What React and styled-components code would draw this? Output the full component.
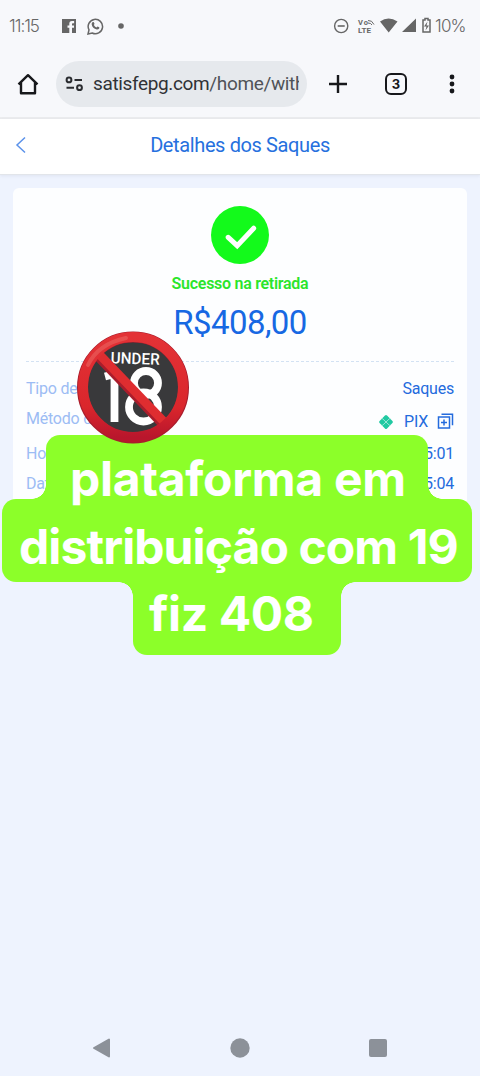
import styled, { createGlobalStyle } from 'styled-components';

const GlobalStyle = createGlobalStyle`
  * {
    box-sizing: border-box;
  }
  body {
    margin: 0;
    background: #eef3fe;
    font-family: Roboto, sans-serif;
  }
  svg {
    display: block;
    flex: none;
  }
`;
const Screen = styled.div`
  position: relative;
  display: flex;
  flex-direction: column;
  width: 480px;
  height: 1076px;
  overflow: hidden;
  background: #eef3fe;
`;
const Chrome = styled.div`
  height: 119px;
  background: #f7f8fb;
  border-bottom: 2px solid #ebecee;
`;
const StatusBar = styled.div`
  display: flex;
  align-items: center;
  height: 52px;
  padding: 0 12px 0 9px;
  color: #666;
`;
const StatusText = styled.span`
  width: ${(p) => p.$width}px;
  font: 300 17px/20px Inter, sans-serif;
  letter-spacing: ${(p) => p.$spacing}px;
  white-space: nowrap;
`;
const StatusIcons = styled.div`
  display: flex;
  align-items: center;
  margin-left: ${(p) => p.$left};
`;
const Toolbar = styled.div`
  display: flex;
  align-items: center;
  height: 64px;
  padding: 0 16px;
`;
const AddressBar = styled.div`
  display: flex;
  align-items: center;
  width: 251px;
  height: 46px;
  margin: 0 20px 0 16px;
  padding: 0 8px 0 9px;
  border-radius: 23px;
  background: #e6e9ed;
`;
const Url = styled.div`
  width: 206px;
  margin-left: 9px;
  overflow: hidden;
  color: #303236;
  font-size: 19px;
  line-height: 26px;
  letter-spacing: -0.36px;
  white-space: nowrap;
`;
const UrlPath = styled.span`
  color: #505358;
`;
const Tabs = styled.div`
  display: flex;
  align-items: center;
  justify-content: center;
  width: 22px;
  height: 22px;
  margin: 0 41px 0 36px;
  border: 2.4px solid #17181b;
  border-radius: 6px;
  color: #17181b;
  font: 700 13px/14px Inter, sans-serif;
`;
const Header = styled.header`
  display: flex;
  align-items: center;
  height: 56px;
  padding: 0 15px;
  background: #fff;
  border-bottom: 1px solid #e2e5ea;
  box-shadow: 0 1px 3px rgba(60, 70, 90, 0.08);
`;
const Title = styled.h1`
  flex: 1;
  margin: 0 11px 3px 0;
  color: #2670de;
  font-size: 20px;
  font-weight: 400;
  line-height: 24px;
  letter-spacing: -0.38px;
  text-align: center;
`;
const Card = styled.main`
  display: flex;
  flex-direction: column;
  align-items: center;
  height: 320px;
  margin: 13px 13px 0;
  padding: 18px 13px 0;
  border-radius: 6px;
  background: #fdfeff;
`;
const Status = styled.div`
  margin-top: 10px;
  color: #2be52b;
  font-size: 16px;
  font-weight: 600;
  line-height: 20px;
  letter-spacing: -0.28px;
`;
const Amount = styled.div`
  margin-top: 8px;
  color: #1768e3;
  font-size: 33px;
  line-height: 42px;
  letter-spacing: -0.55px;
`;
const Details = styled.div`
  width: 100%;
  margin-top: 17px;
  padding-top: 12px;
  border-top: 1px dashed #d3e2f3;
`;
const Row = styled.div`
  display: flex;
  align-items: center;
  justify-content: space-between;
  height: ${(p) => p.$height || 30}px;
  font-size: 16px;
  line-height: 20px;
  letter-spacing: -0.22px;
`;
const Label = styled.span`
  align-self: flex-start;
  margin-top: 5px;
  color: #9cbcf4;
`;
const Value = styled.span`
  display: flex;
  align-items: center;
  color: #246bdd;
`;
const Method = styled.span`
  margin: 0 9px 0 10px;
`;
const Emoji = styled.div`
  position: absolute;
  z-index: 2;
  top: 330px;
  left: 76px;
`;
const Caption = styled.div`
  position: absolute;
  top: 435px;
  left: 2px;
  display: flex;
  flex-direction: column;
  width: 470px;
`;
const CaptionLine = styled.div`
  position: relative;
  width: ${(p) => p.$width}px;
  height: ${(p) => p.$height}px;
  margin-left: ${(p) => p.$left}px;
  padding: ${(p) => p.$pad};
  border-radius: ${(p) => p.$radius};
  background: #8cff29;
  color: #fff;
  font: 700 48px/58px Inter, sans-serif;
  letter-spacing: ${(p) => p.$spacing}px;
  white-space: nowrap;
  &::before,
  &::after {
    content: '';
    position: absolute;
    display: ${(p) => (p.$notch ? 'block' : 'none')};
    ${(p) => p.$notch || 'top'}: 0;
    width: 14px;
    height: 14px;
  }
  &::before {
    right: 100%;
    background: radial-gradient(circle at left ${(p) => (p.$notch === 'top' ? 'bottom' : 'top')}, transparent 13.5px, #8cff29 14px);
  }
  &::after {
    left: 100%;
    background: radial-gradient(circle at right ${(p) => (p.$notch === 'top' ? 'bottom' : 'top')}, transparent 13.5px, #8cff29 14px);
  }
`;
const CaptionText = styled.span`
  position: relative;
  z-index: 1;
`;
const NavBar = styled.nav`
  display: flex;
  align-items: center;
  justify-content: space-between;
  height: 56px;
  margin-top: auto;
  padding: 0 92px;
`;

const FacebookIcon = () => (
  <svg width="14" height="14" viewBox="0 0 14 14">
    <path fill="#666" d="M0 0h14v14h-4V8.8h2V6.5h-2V5.2c0-.8.3-1 1-1h1.1V2H10C8 2 7.3 3.3 7.3 4.8v1.7H5.5v2.3h1.8V14H0Z" />
  </svg>
);
const WhatsappIcon = () => (
  <svg width="17" height="17" viewBox="0 0 17 17" style={{ marginLeft: 11 }}>
    <path fill="none" stroke="#666" strokeWidth="1.5" d="m1 16 1-4.1A7.2 7.2 0 1 1 5.2 15Z" />
    <path fill="#666" d="M5.8 4.1c.5-.3.9-.2 1.1.3l.6 1.4c.1.4-.5.8-.6 1.2.5 1.1 1.4 1.9 2.5 2.4.5-.1.8-1 1.2-.9l1.5.8c.4.2.3.7.1 1.1-.5.9-1.5 1.3-2.5 1.1C7.1 11 5 9 4.7 6.5c-.1-.9.3-1.9 1.1-2.4Z" />
  </svg>
);
const SystemIcons = () => (
  <svg width="102" height="20" viewBox="0 0 102 20" fill="#666">
    <circle cx="8.2" cy="10" r="6.6" fill="none" stroke="#666" strokeWidth="1.4" />
    <path d="M4.7 9.2h7v1.6h-7Z" />
    <text x="25" y="8.6" fontFamily="Roboto" fontSize="7.5" fontWeight="700" textLength="10">Vo</text>
    <text x="25" y="16.5" fontFamily="Roboto" fontSize="8" fontWeight="700" textLength="13">LTE</text>
    <path d="M35 4.500q4-.5 6 4M35 7q3 0 4 2" fill="none" stroke="#666" strokeWidth="1" />
    <path d="M47 5.400q8.500-6 17.500 0L55.700 16.400Z M69 16L83 2.500V16Z" />
    <path d="M92 2.500h3v1.500h2v12h-7V4h2Z" fill="none" stroke="#666" strokeWidth="1.5" />
    <path d="m94.500 5.500-3.500 5h2.500l-1 4 3.500-5h-2.500Z" />
  </svg>
);
const HomeIcon = () => (
  <svg width="24" height="24" viewBox="0 0 24 24" fill="none" stroke="#17181b" strokeWidth="2.4">
    <path d="M2.500 12.300 12 3.200l9.500 9.100M5 10.500v10.700h14V10.500" strokeLinejoin="round" />
  </svg>
);
const TuneIcon = () => (
  <svg width="19" height="16" viewBox="0 0 19 16" fill="none" stroke="#2a2c30" strokeWidth="2">
    <circle cx="4" cy="3.9" r="2.4" />
    <circle cx="14.5" cy="11.7" r="2.4" />
    <path d="M9.500 3.900h7.500M1.500 11.700H9" />
  </svg>
);
const PlusIcon = () => (
  <svg width="22" height="22" viewBox="0 0 22 22" stroke="#17181b" strokeWidth="2.4">
    <path d="M2 11h18M11 2v18" />
  </svg>
);
const MenuIcon = () => (
  <svg width="8" height="22" viewBox="0 0 8 22" fill="#17181b">
    <circle cx="4" cy="4" r="2.4" />
    <circle cx="4" cy="11" r="2.4" />
    <circle cx="4" cy="18" r="2.4" />
  </svg>
);
const BackIcon = () => (
  <svg width="11" height="18" viewBox="0 0 11 18" fill="none" stroke="#5b92ea" strokeWidth="1.5" style={{ marginBottom: 3 }}>
    <path d="M10 1.500 2 9l8 7.500" />
  </svg>
);
const SuccessIcon = () => (
  <svg width="58" height="58" viewBox="0 0 58 58">
    <circle cx="29" cy="29" r="29" fill="#13fa1b" />
    <path d="m17.200 31.300 9 8.400 16.500-17.500" fill="none" stroke="#fff" strokeWidth="5" strokeLinecap="round" />
  </svg>
);
const PixIcon = () => (
  <svg width="16" height="16" viewBox="0 0 16 16">
    <rect x="2.7" y="2.7" width="10.6" height="10.6" rx="1.5" transform="rotate(45 8 8)" fill="#20c9a2" />
    <path d="M3.500 4.800h1.200L8 8l3.300-3.200h1.200M3.500 11.200h1.200L8 8l3.300 3.200h1.200" fill="none" stroke="#b5efe1" strokeWidth=".8" />
  </svg>
);
const CopyIcon = () => (
  <svg width="17" height="17" viewBox="0 0 17 17" fill="none" stroke="#246bdd" strokeWidth="1.5">
    <path d="M1.500 4h11v11h-11ZM4.500 1.200h11v11M7 6.500v6M4 9.500h6" />
  </svg>
);
const UnderageIcon = () => (
  <svg width="114" height="115" viewBox="0 0 114 115">
    <defs>
      <linearGradient id="ring" x1="0" y1="0" x2="0" y2="1">
        <stop offset="0" stopColor="#e33236" />
        <stop offset=".7" stopColor="#da262c" />
        <stop offset="1" stopColor="#b9162c" />
      </linearGradient>
    </defs>
    <circle cx="57" cy="57.5" r="50.5" fill="#39393b" stroke="#a91d2c" strokeWidth="11" />
    <text x="34.5" y="34" fill="#fff" fontFamily="Roboto" fontSize="16" fontWeight="500" textLength="49" lengthAdjust="spacingAndGlyphs" transform="rotate(2 57 34)">UNDER</text>
    <g fill="none" stroke="#fff" strokeWidth="7.8">
      <path d="M29 46.500 38.500 44V92" />
      <circle cx="70" cy="53" r="12" />
      <circle cx="67.5" cy="77" r="14.5" />
    </g>
    <path d="m21 25 69 72" stroke="#a91d2c" strokeWidth="10" />
    <path d="m21 22 71 74" stroke="#df2d30" strokeWidth="9" />
    <circle cx="57" cy="57" r="50" fill="none" stroke="url(#ring)" strokeWidth="10" />
    <path d="M12 35Q22 14 50 8" fill="none" stroke="#f07c75" strokeWidth="4" strokeLinecap="round" opacity=".4" />
  </svg>
);

const App = () => {
  return (
    <Screen>
      <GlobalStyle />
      <Chrome>
        <StatusBar>
          <StatusText $width={53} $spacing={-1}>11:15</StatusText>
          <StatusIcons $left="0">
            <FacebookIcon />
            <WhatsappIcon />
            <svg width="6" height="6" viewBox="0 0 6 6" style={{ marginLeft: 14 }}>
              <circle cx="3" cy="3" r="2.8" fill="#666" />
            </svg>
          </StatusIcons>
          <StatusIcons $left="auto">
            <SystemIcons />
            <StatusText $width={33} $spacing={-0.8}>10%</StatusText>
          </StatusIcons>
        </StatusBar>
        <Toolbar>
          <HomeIcon />
          <AddressBar>
            <TuneIcon />
            <Url>
              satisfepg.com<UrlPath>/home/with</UrlPath>
            </Url>
          </AddressBar>
          <PlusIcon />
          <Tabs>3</Tabs>
          <MenuIcon />
        </Toolbar>
      </Chrome>
      <Header>
        <BackIcon />
        <Title>Detalhes dos Saques</Title>
      </Header>
      <Card>
        <SuccessIcon />
        <Status>Sucesso na retirada</Status>
        <Amount>R$408,00</Amount>
        <Details>
          <Row>
            <Label>Tipo de Saque</Label>
            <Value>Saques</Value>
          </Row>
          <Row $height={35}>
            <Label>Método de saque</Label>
            <Value>
              <PixIcon />
              <Method>PIX</Method>
              <CopyIcon />
            </Value>
          </Row>
          <Row>
            <Label>Hora</Label>
            <Value>11:15:01</Value>
          </Row>
          <Row>
            <Label>Data</Label>
            <Value>11:15:04</Value>
          </Row>
        </Details>
      </Card>
      <Emoji>
        <UnderageIcon />
      </Emoji>
      <Caption>
        <CaptionLine $width={382} $height={64} $left={44} $pad="15px 0 0 24px" $radius="14px 14px 0 0" $notch="bottom" $spacing={-0.3}>
          <CaptionText>plataforma em</CaptionText>
        </CaptionLine>
        <CaptionLine $width={470} $height={83} $left={0} $pad="19px 0 0 17px" $radius="14px" $spacing={-0.9}>
          <CaptionText>distribuição com 19</CaptionText>
        </CaptionLine>
        <CaptionLine $width={208} $height={73} $left={131} $pad="3px 0 0 16px" $radius="0 0 14px 14px" $notch="top" $spacing={-0.4}>
          <CaptionText>fiz 408</CaptionText>
        </CaptionLine>
      </Caption>
      <NavBar>
        <svg width="20" height="20" viewBox="0 0 20 20">
          <path d="m2 10 15-8.500v17Z" fill="#8c9199" stroke="#8c9199" strokeWidth="2" strokeLinejoin="round" />
        </svg>
        <svg width="20" height="20" viewBox="0 0 20 20">
          <circle cx="10" cy="10" r="9.7" fill="#8c9199" />
        </svg>
        <svg width="20" height="20" viewBox="0 0 20 20">
          <rect x="1" y="1" width="18" height="18" rx="2" fill="#8c9199" />
        </svg>
      </NavBar>
    </Screen>
  );
};

export default App;
